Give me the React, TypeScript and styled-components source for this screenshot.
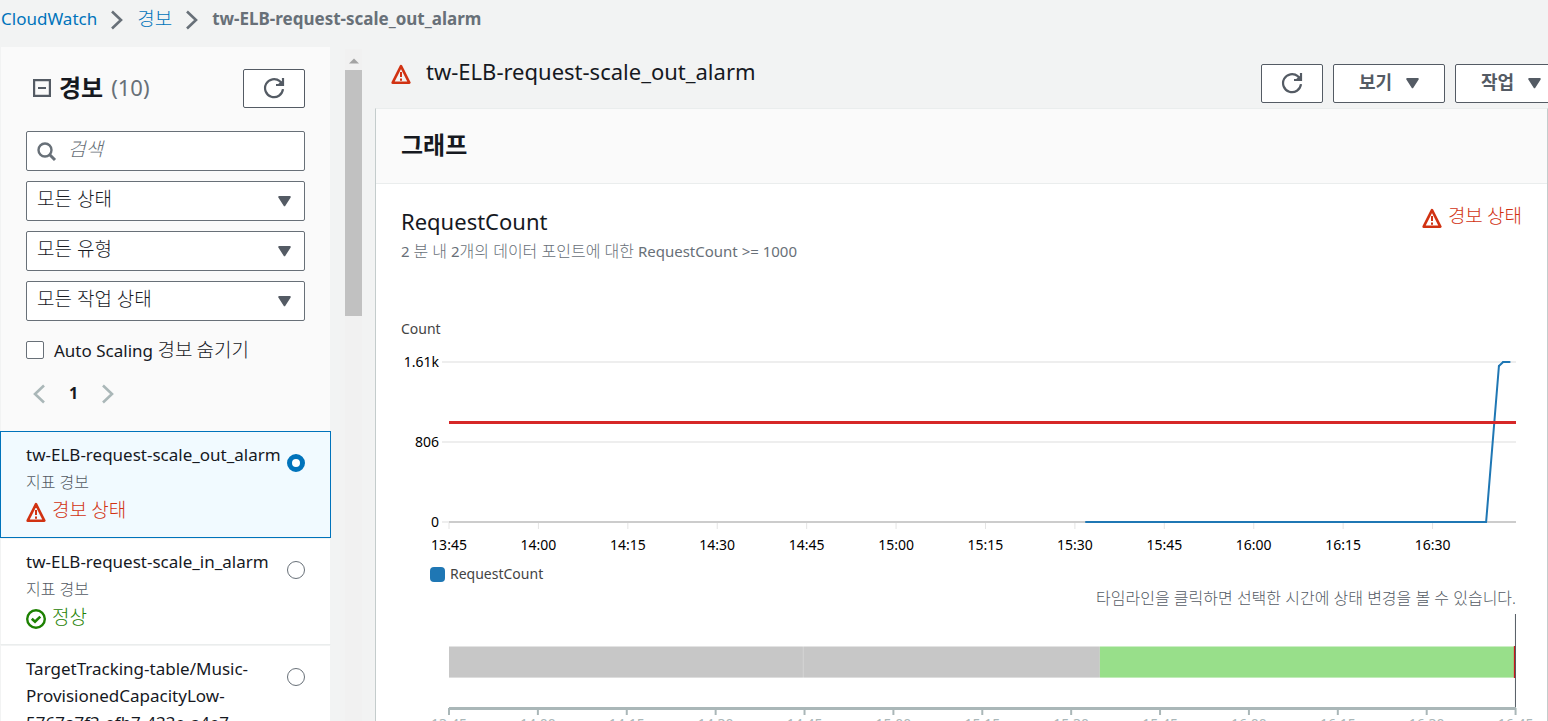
import React from "react";
import styled, { createGlobalStyle } from "styled-components";

const Global = createGlobalStyle`
  *, *::before, *::after { box-sizing: border-box; }
  html, body, #root { height: 100%; }
  body {
    margin: 0;
    overflow: hidden;
    background: #f2f3f3;
    color: #16191f;
    font-family: "Noto Sans", "Noto Sans CJK KR", sans-serif;
    font-size: 17px;
    line-height: 27px;
  }
  button, input, select { font: inherit; color: inherit; margin: 0; }
  h1, h2, h3, p, ul, ol { margin: 0; padding: 0; font-weight: 400; }
  ul, ol { list-style: none; }
  svg { display: block; flex: none; }
`;

const Page = styled.div`
  display: flex;
  flex-direction: column;
  height: 100%;
`;

const Ko = styled.span`
  font-family: "Noto Sans CJK KR", sans-serif;
  font-size: 19px;
  font-weight: 300;
  line-height: 26px;
`;

const Breadcrumbs = styled.ol`
  display: flex;
  flex: none;
  align-items: center;
  height: 47px;
  padding: 0 1px 10px;
  li { display: flex; align-items: center; }
  svg { margin: 2px 14px 0; }
  a { color: #0073bb; text-decoration: none; }
  strong { color: #687078; }
`;

const Body = styled.div`
  display: flex;
  flex: 1;
  min-height: 0;
`;

const Sidebar = styled.aside`
  flex: none;
  width: 331px;
  overflow: hidden;
`;

const Filters = styled.div`
  display: flex;
  flex-direction: column;
  gap: 10px;
  height: 384px;
  margin: 0 1px;
  padding: 22px 25px 0;
  background: #fafafa;
`;

const SideHeader = styled.div`
  display: flex;
  align-items: center;
  justify-content: space-between;
  margin-bottom: 13px;
`;

const SideTitle = styled.h2`
  display: flex;
  align-items: center;
  gap: 8px;
  padding: 0 0 2px 7px;
  font-size: 22px;
  strong { font-size: 24px; font-weight: 700; }
  span { color: #687078; }
`;

const Button = styled.button<{ $wide?: boolean }>`
  display: flex;
  flex: none;
  align-items: center;
  justify-content: center;
  gap: 14px;
  width: ${(p) => (p.$wide ? "112px" : "62px")};
  height: 39px;
  padding: 0 0 1px;
  border: 1px solid #545b64;
  border-radius: 2px;
  background: #fff;
  color: #545b64;
  font-size: 18px;
  font-weight: 700;
  line-height: 34px;
  span { height: 36px; }
`;

const Field = styled.label`
  position: relative;
  display: block;
  svg { position: absolute; pointer-events: none; }
`;

const SearchField = styled(Field)`
  svg { left: 11px; top: 11px; }
`;

const SelectField = styled(Field)`
  svg { right: 14px; top: 14px; }
`;

const SearchInput = styled.input`
  display: block;
  width: 100%;
  height: 40px;
  padding: 0 10px 4px 41px;
  border: 1px solid #687078;
  border-radius: 2px;
  background: #fff;
  font-size: 19px;
  font-weight: 300;
  &::placeholder { color: #687078; font-style: italic; opacity: 1; }
`;

const Select = styled.select`
  appearance: none;
  display: block;
  width: 100%;
  height: 40px;
  padding: 0 30px 4px 10px;
  border: 1px solid #687078;
  border-radius: 2px;
  background: #fff;
  font-size: 19px;
  font-weight: 300;
`;

const CheckLabel = styled.label`
  display: flex;
  align-items: center;
  gap: 10px;
  height: 38px;
  span { padding-bottom: 1px; }
`;

const Checkbox = styled.input`
  appearance: none;
  width: 18px;
  height: 18px;
  border: 1px solid #687078;
  border-radius: 2px;
  background: #fff;
`;

const Pager = styled.nav`
  display: flex;
  align-items: center;
  gap: 24px;
  padding: 1px 0 0 7px;
  strong { font-size: 16px; }
  button {
    display: flex;
    padding: 0;
    border: 0;
    background: none;
  }
`;

const Alarm = styled.li<{ $selected?: boolean }>`
  padding: 9px 25px 12px;
  border: 1px solid ${(p) => (p.$selected ? "#0073bb" : "transparent")};
  ${(p) => !p.$selected && "border-bottom-color: #eaeded;"}
  background: ${(p) => (p.$selected ? "#f1faff" : "#fff")};
  background-clip: padding-box;
`;

const AlarmHead = styled.label`
  display: flex;
  justify-content: space-between;
  span { flex: 1; min-width: 0; overflow-wrap: anywhere; }
`;

const Radio = styled.input`
  appearance: none;
  flex: none;
  width: 18px;
  height: 18px;
  margin: 13px 0 -4px;
  border: 1px solid #687078;
  border-radius: 50%;
  background: #fff;
  &:checked { border: 5px solid #0073bb; }
`;

const AlarmKind = styled.p`
  padding-top: 1px;
  color: #545b64;
  font-size: 16px;
  font-weight: 300;
`;

const Status = styled.p<{ $ok?: boolean }>`
  display: flex;
  gap: 6px;
  height: 29px;
  color: ${(p) => (p.$ok ? "#1d8102" : "#d13212")};
  svg { margin-top: 6px; }
`;

const Scrollbar = styled.div`
  flex: none;
  width: 17px;
  margin: 2px 13px 0 14px;
  padding-top: 9px;
  background: #f1f1f1;
  svg { margin: 0 auto 6px; }
`;

const Thumb = styled.div`
  height: 246px;
  background: #c1c1c1;
`;

const Main = styled.main`
  display: flex;
  flex: 1;
  flex-direction: column;
  min-width: 0;
  overflow: hidden;
`;

const MainHeader = styled.header`
  display: flex;
  flex: none;
  align-items: flex-start;
  gap: 10px;
  height: 61px;
  margin-right: -19px;
  padding: 17px 0 0 16px;
`;

const MainTitle = styled.h1`
  display: flex;
  flex: 1;
  gap: 15px;
  align-items: center;
  height: 20px;
  font-size: 22px;
  min-width: 0;
  span { padding-bottom: 5px; }
`;

const Panel = styled.section`
  flex: 1;
  border: 1px solid #eaeded;
  border-left-color: #c4cccc;
  border-right-color: #c4cccc;
  background: #fff;
`;

const PanelHeader = styled.div`
  height: 75px;
  padding: 20px 25px;
  border-bottom: 1px solid #eaeded;
  background: #fafafa;
  h2 { font-size: 24px; font-weight: 700; line-height: 32px; }
`;

const PanelBody = styled.div`
  padding: 18px 25px 0;
`;

const MetricHead = styled.div`
  display: flex;
  justify-content: space-between;
  h3 { font-size: 22px; line-height: 39px; }
`;

const Note = styled.p<{ $right?: boolean }>`
  color: ${(p) => (p.$right ? "#545b64" : "#687078")};
  font-size: ${(p) => (p.$right ? "16px" : "15px")};
  font-weight: ${(p) => (p.$right ? 300 : 400)};
  line-height: 20px;
  text-align: ${(p) => (p.$right ? "right" : "left")};
  span { font-size: 16px; font-weight: 300; }
`;

const ChartArea = styled.div`
  margin: 55px 6px 0 0;
`;

const AxisTitle = styled.p`
  color: #444;
  font-size: 14px;
  line-height: 26px;
`;

const Plot = styled.svg`
  width: calc(100% - 48px);
  margin-left: 48px;
  overflow: visible;
  font-size: 14px;
`;

const Legend = styled.div`
  display: flex;
  align-items: center;
  gap: 5px;
  margin: 10px 0 4px 29px;
  color: #444;
  font-size: 14px;
  line-height: 20px;
  i { width: 15px; height: 15px; border-radius: 4px; background: #1f77b4; }
`;

const RefreshIcon = () => (
  <svg width="22" height="22" viewBox="0 0 22 22" fill="none" stroke="#545b64" strokeWidth="2.2">
    <path d="M20 12.2A9 9 0 1 1 16.8 4.2L19.5 7" />
    <path d="M20 1v7h-7" />
    <path d="M20 3v5h-6z" fill="#545b64" stroke="none" />
  </svg>
);

const Caret = () => (
  <svg width="13" height="12" viewBox="0 0 13 12" fill="#545b64">
    <path d="M1.2 2h10.6L6.5 10.3z" stroke="#545b64" strokeWidth="2" strokeLinejoin="round" />
  </svg>
);

const AlarmIcon = () => (
  <svg width="20" height="20" viewBox="0 0 20 20" fill="none" stroke="#d13212">
    <path d="M10 2.2L18.3 18.7H1.7z" strokeWidth="2.6" strokeLinejoin="round" />
    <path d="M10 8v5M10 14.5v2.2" strokeWidth="2" />
  </svg>
);

const OkIcon = () => (
  <svg width="20" height="20" viewBox="0 0 20 20" fill="none" stroke="#1d8102">
    <circle cx="10" cy="10" r="8.8" strokeWidth="2.4" />
    <path d="M5.8 9.8L9 12.8l5.3-5.2" strokeWidth="2.6" />
  </svg>
);

const Chevron = ({ left, color }: { left?: boolean; color: string }) => (
  <svg width="12" height="20" viewBox="0 0 12 20" fill="none" stroke={color} strokeWidth="2.6">
    <path d={left ? "M11 1.5L2 10l9 8.5" : "M1 1.5L10 10l-9 8.5"} />
  </svg>
);

const yAxis = [
  { label: "1.61k", y: 20 },
  { label: "806", y: 100 },
  { label: "0", y: 180 },
];
const times = ["13:45", "14:00", "14:15", "14:30", "14:45", "15:00", "15:15", "15:30", "15:45", "16:00", "16:15", "16:30"];
const series = [
  [59.7, 180],
  [97.2, 180],
  [98.4, 24],
  [98.8, 20],
  [99.4, 20],
];

const alarms = [
  { name: "tw-ELB-request-scale_out_alarm", selected: true, ok: false },
  { name: "tw-ELB-request-scale_in_alarm", selected: false, ok: true },
  { name: "TargetTracking-table/Music-ProvisionedCapacityLow-5767a7f3-efb7-433e-a4e7-", selected: false, ok: true },
];

const MetricChart = () => (
  <Plot height="212" role="img" aria-label="RequestCount">
    {yAxis.map((t) => (
      <React.Fragment key={t.label}>
        <line x1="-7" x2="100%" y1={t.y} y2={t.y} stroke="#eee" strokeWidth="2" />
        <text x="-10" y={t.y + 5} textAnchor="end">{t.label}</text>
      </React.Fragment>
    ))}
    <line x1="0" x2="100%" y1="180" y2="180" stroke="#ccc" strokeWidth="2" />
    {times.map((t, i) => (
      <React.Fragment key={t}>
        <line x1={`${i * 8.38}%`} x2={`${i * 8.38}%`} y1="181" y2="187" stroke="#e4e4e4" strokeWidth="1" />
        <text x={`${i * 8.38}%`} y="208" textAnchor="middle">{t}</text>
      </React.Fragment>
    ))}
    {series.slice(1).map(([x, y], i) => (
      <line
        key={x}
        x1={`${series[i][0]}%`}
        y1={series[i][1]}
        x2={`${x}%`}
        y2={y}
        stroke="#1f77b4"
        strokeWidth="2"
        strokeLinecap="round"
      />
    ))}
    <line x1="0" x2="100%" y1="80.5" y2="80.5" stroke="#d62728" strokeWidth="3" />
  </Plot>
);

const Timeline = () => (
  <Plot height="130" role="img" aria-label="타임라인">
    <rect x="0" y="38" width="61%" height="32" fill="#c7c7c7" />
    <line x1="33.2%" x2="33.2%" y1="38" y2="70" stroke="#d6d6d6" />
    <rect x="61%" y="38" width="39%" height="32" fill="#98df8a" />
    <line x1="0" x2="100%" y1="38.5" y2="38.5" stroke="#fff" strokeOpacity=".5" />
    <line x1="0" x2="100%" y1="69.5" y2="69.5" stroke="#fff" strokeOpacity=".4" />
    <rect x="99.8%" y="38" width="2" height="32" fill="#d0141c" />
    <line x1="99.95%" x2="99.95%" y1="6" y2="100" stroke="#545b64" />
    <line x1="0" x2="100%" y1="100.5" y2="100.5" stroke="#aab7b8" strokeWidth="3" />
    {[...times, "16:45"].map((t, i) => (
      <React.Fragment key={t}>
        <line x1={`${i * 8.33}%`} x2={`${i * 8.33}%`} y1="100" y2="107" stroke="#aab7b8" strokeWidth="2" />
        <text x={`${i * 8.33}%`} y="121" textAnchor="middle" fill="#aab7b8">{t}</text>
      </React.Fragment>
    ))}
  </Plot>
);

export default function App() {
  return (
    <Page>
      <Global />
      <Breadcrumbs>
        <li><a href="#cloudwatch">CloudWatch</a><Chevron color="#687078" /></li>
        <li><a href="#alarms"><Ko>경보</Ko></a><Chevron color="#687078" /></li>
        <li><strong>tw-ELB-request-scale_out_alarm</strong></li>
      </Breadcrumbs>
      <Body>
        <Sidebar>
          <Filters>
            <SideHeader>
              <SideTitle>
                <svg width="18" height="18" viewBox="0 0 18 18" fill="none" stroke="#545b64" strokeWidth="2.2">
                  <path d="M1.1 1.1h15.8v15.8H1.1zM5 9h8" />
                </svg>
                <strong>경보</strong>
                <span>(10)</span>
              </SideTitle>
              <Button aria-label="새로 고침"><RefreshIcon /></Button>
            </SideHeader>
            <SearchField>
              <SearchInput type="text" placeholder="검색" aria-label="검색" />
              <svg width="20" height="20" viewBox="0 0 20 20" fill="none" stroke="#687078">
                <circle cx="8" cy="8" r="6.5" strokeWidth="2.4" />
                <path d="M12.5 12.5l5.5 5.5" strokeWidth="3" />
              </svg>
            </SearchField>
            {["모든 상태", "모든 유형", "모든 작업 상태"].map((label) => (
              <SelectField key={label}>
                <Select aria-label={label}><option>{label}</option></Select>
                <Caret />
              </SelectField>
            ))}
            <CheckLabel>
              <Checkbox type="checkbox" />
              <span>Auto Scaling <Ko>경보 숨기기</Ko></span>
            </CheckLabel>
            <Pager aria-label="페이지">
              <button aria-label="이전"><Chevron left color="#aab7b8" /></button>
              <strong>1</strong>
              <button aria-label="다음"><Chevron color="#aab7b8" /></button>
            </Pager>
          </Filters>
          <ul>
            {alarms.map((a) => (
              <Alarm key={a.name} $selected={a.selected}>
                <AlarmHead>
                  <span>{a.name}</span>
                  <Radio type="radio" name="alarm" defaultChecked={a.selected} />
                </AlarmHead>
                <AlarmKind>지표 경보</AlarmKind>
                <Status $ok={a.ok}>
                  {a.ok ? <OkIcon /> : <AlarmIcon />}
                  <Ko>{a.ok ? "정상" : "경보 상태"}</Ko>
                </Status>
              </Alarm>
            ))}
          </ul>
        </Sidebar>
        <Scrollbar>
          <svg width="10" height="6" viewBox="0 0 10 6" fill="#a3a3a3"><path d="M0 5.5L5 .5l5 5z" /></svg>
          <Thumb />
        </Scrollbar>
        <Main>
          <MainHeader>
            <MainTitle><AlarmIcon /><span>tw-ELB-request-scale_out_alarm</span></MainTitle>
            <Button aria-label="새로 고침"><RefreshIcon /></Button>
            <Button $wide><span>보기</span><Caret /></Button>
            <Button $wide><span>작업</span><Caret /></Button>
          </MainHeader>
          <Panel>
            <PanelHeader><h2>그래프</h2></PanelHeader>
            <PanelBody>
              <MetricHead>
                <h3>RequestCount</h3>
                <Status><AlarmIcon /><Ko>경보 상태</Ko></Status>
              </MetricHead>
              <Note>2 <span>분 내</span> 2<span>개의 데이터 포인트에 대한</span> RequestCount &gt;= 1000</Note>
              <ChartArea>
                <AxisTitle>Count</AxisTitle>
                <MetricChart />
                <Legend><i />RequestCount</Legend>
                <Note $right>타임라인을 클릭하면 선택한 시간에 상태 변경을 볼 수 있습니다.</Note>
                <Timeline />
              </ChartArea>
            </PanelBody>
          </Panel>
        </Main>
      </Body>
    </Page>
  );
}
